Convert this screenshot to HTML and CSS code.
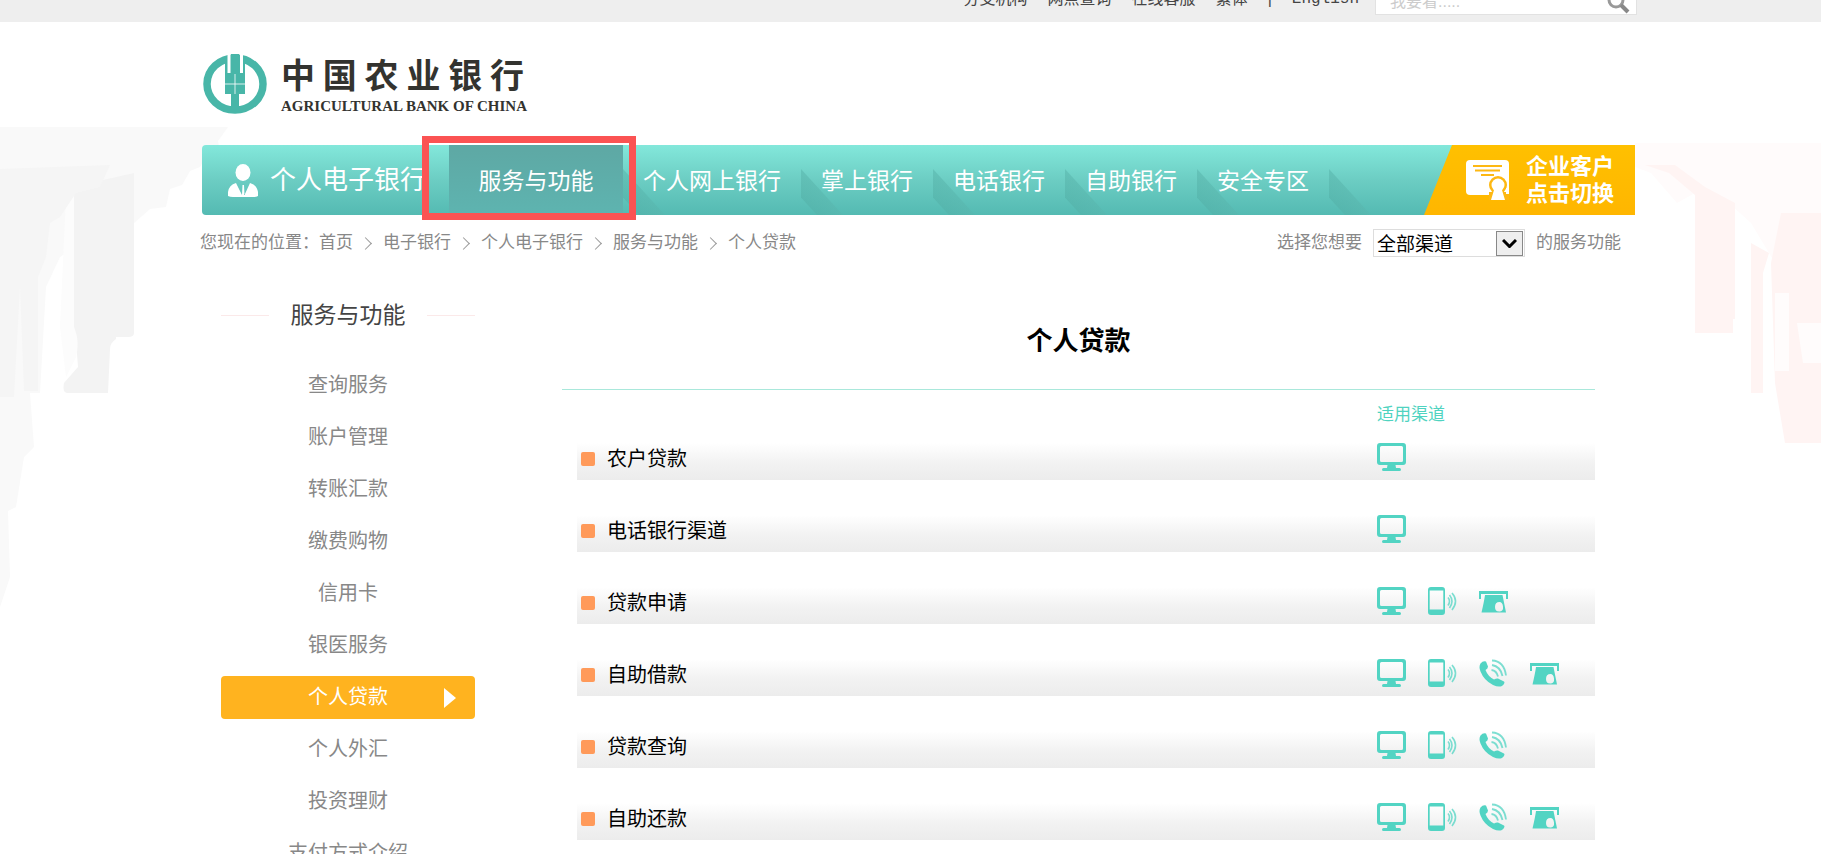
FILE: index.html
```html
<!DOCTYPE html>
<html lang="zh-CN">
<head>
<meta charset="utf-8">
<title>个人贷款 - 中国农业银行</title>
<link rel="stylesheet" href="styles.css">
</head>
<body>
<svg class="symbols" aria-hidden="true">
  <symbol id="pc" viewBox="0 0 29 28">
    <path fill-rule="evenodd" d="M3 0h23a3 3 0 0 1 3 3v16a3 3 0 0 1-3 3h-7.500l.5 3h3.500q1.500 0 1.500 1.500T22.500 28h-16Q5 28 5 26.500T6.500 25H10l.5-3H3a3 3 0 0 1-3-3V3a3 3 0 0 1 3-3zM4.500 3Q3 3 3 4.500v13Q3 19 4.500 19h20q1.500 0 1.500-1.500v-13Q26 3 24.500 3z"/>
  </symbol>
  <symbol id="mobile" viewBox="0 0 29 28">
    <path fill-rule="evenodd" d="M3 0h11a3 3 0 0 1 3 3v22a3 3 0 0 1-3 3H3a3 3 0 0 1-3-3V3a3 3 0 0 1 3-3zM1.700 3.500v19h13.600v-19z"/>
    <path fill="none" stroke="currentColor" stroke-width="1.600" opacity=".75" d="M20 10.500q3 3.500 0 8M21.500 8q5 6 0 13M24 6q7 8 0 17"/>
  </symbol>
  <symbol id="phone" viewBox="0 0 29 28">
    <path d="M1.500 4.500Q4 1.500 7 2.500l2 5Q9 9.500 6.500 11q2.500 6.500 8.500 9.500 2.500-1.500 4-1l6 3q1.500 2-2 4.500-3.500 1.500-9-1Q5 21.500 1.500 12.500-.5 8 1.500 4.500z"/>
    <path fill="none" stroke="currentColor" stroke-width="1.800" opacity=".75" d="M12.500 11q5 .5 6.500 6.500M13 6q8.500 1.500 10.500 11M13 1.500q12 .5 14 15"/>
  </symbol>
  <symbol id="atm" viewBox="0 0 29 28">
    <path d="M0 4h29v3H0zM0 7h2v5H0zM27 7h2v5h-2z"/>
    <path fill-rule="evenodd" d="M6 8h17.500l3.500 17.500H2.500Q5 15 6 8zM20.500 15q-4.500 0-4.500 5t5 4.500q3.500-.5 3-5-.5-4.500-3.500-4.500z"/>
  </symbol>
</svg>

<div class="page">
  <svg class="scene scene-left" viewBox="0 0 230 490" aria-hidden="true">
    <path fill="#f9f9f9" d="M0 0H228L218 14 220 24 206 30 200 40 190 44 182 58 170 62 166 80 150 82 134 96V116L120 130 90 110 60 130 46 160 40 266H30L34 320 24 330 16 380 8 384 10 450 0 480z"/>
    <path fill="#f3f3f3" d="M72 60L134 46V206Q134 210 128 210H116V212Q110 216 110 222L108 266H68Q62 266 64 256L78 240 76 214 70 180z"/>
    <path fill="#fcfcfc" d="M66 70L74 60V200Q80 214 76 230L66 250 60 200z"/>
    <path fill="#f5f5f5" d="M0 42L110 38 100 60 76 66 60 90 50 96 46 130 38 150V264H24L20 160 14 270H0z"/>
  </svg>
  <svg class="scene scene-right" viewBox="0 0 186 320" aria-hidden="true">
    <path fill="#fffbfb" d="M0 0H186V180H148L140 120 116 80 96 62 60 50 42 60 16 30 0 24z"/>
    <path fill="#fff4f3" d="M10 22L34 30 60 52V190H98V176H100V60L70 44 40 22zM116 100V250H128V130L134 110zM146 70L136 120 140 240 150 300H186V70z"/>
    <path fill="#fffcfc" d="M140 150h14v78h-14zM162 180h24v40h-18z"/>
  </svg>

  <header class="topbar">
    <div class="wrap topbar-inner">
      <a href="#">分支机构</a>
      <a href="#">网点查询</a>
      <a href="#">在线客服</a>
      <a href="#">繁体</a>
      <span>|</span>
      <a href="#" class="english">English</a>
      <form class="search">
        <input type="text" aria-label="搜索" placeholder="我要看.....">
        <button type="button" aria-label="搜索">
          <svg viewBox="0 0 24 24"><circle cx="10" cy="10" r="7" fill="none" stroke="#999" stroke-width="3"/><path d="M15 15l7 7" stroke="#888" stroke-width="4"/></svg>
        </button>
      </form>
    </div>
  </header>

  <div class="wrap">
    <a class="logo" href="#">
      <svg viewBox="0 0 64 60" aria-hidden="true">
        <ellipse cx="32" cy="30" rx="28" ry="26" fill="none" stroke="#48b6a8" stroke-width="7.500"/>
        <path fill="#48b6a8" d="M22 2h20v38H22zM28 0h8v59h-8z"/>
        <path fill="none" stroke="#fff" stroke-width="3" d="M26 0v19M38.500 0v19"/>
        <path fill="none" stroke="#fff" stroke-width="1" opacity=".8" d="M32 20v20M22 30h20"/>
      </svg>
      <span class="logo-text">
        <span class="logo-cn"><span>中</span><span>国</span><span>农</span><span>业</span><span>银</span><span>行</span></span>
        <span class="logo-en">AGRICULTURAL BANK OF CHINA</span>
      </span>
    </a>

    <nav class="nav">
      <a class="brand" href="#">
        <svg viewBox="0 0 30 33" aria-hidden="true"><ellipse cx="15" cy="8.500" rx="7.500" ry="8.500"/><path d="M8 19l6 12 .5-10h1.500l.5 10L22 19q7 2 8 9v4q-2 1-5 1H5q-3 0-5-1v-4q1-7 8-9z"/></svg>
        <span>个人电子银行</span>
      </a>
      <a class="item current" href="#">服务与功能</a>
      <a class="item" href="#">个人网上银行</a>
      <a class="item" href="#">掌上银行</a>
      <a class="item" href="#">电话银行</a>
      <a class="item" href="#">自助银行</a>
      <a class="item" href="#">安全专区</a>
      <a class="switch" href="#">
        <svg viewBox="0 0 43 40" aria-hidden="true">
          <rect width="43" height="35" rx="4" fill="#fff"/>
          <path stroke="#fdb813" stroke-width="2" d="M7 6h29M9 10.500h25M15 15h13"/>
          <circle cx="32" cy="25" r="9" fill="#fdb813"/><path fill="#fdb813" d="M23 32h20v8H23z"/>
          <circle cx="32" cy="25" r="6.500" fill="#fff"/><path fill="#fff" d="M28 30h8l3 10H25zM40 28h3v6h-3z"/>
        </svg>
        <span>企业客户<br>点击切换</span>
      </a>
    </nav>

    <div class="pathbar">
      <span>您现在的位置：</span>
      <ol class="crumbs">
        <li><a href="#">首页</a></li>
        <li><a href="#">电子银行</a></li>
        <li><a href="#">个人电子银行</a></li>
        <li><a href="#">服务与功能</a></li>
        <li>个人贷款</li>
      </ol>
      <div class="filter">
        <label for="channel">选择您想要</label>
        <span class="select-box">
          <select id="channel"><option>全部渠道</option></select>
          <span class="arrow"><svg viewBox="0 0 15 9" aria-hidden="true"><path d="M1 1l6.500 6.500L14 1" fill="none" stroke="#000" stroke-width="3"/></svg></span>
        </span>
        <span>的服务功能</span>
      </div>
    </div>

    <div class="columns">
      <aside class="side">
        <h2>服务与功能</h2>
        <ul>
          <li><a href="#">查询服务</a></li>
          <li><a href="#">账户管理</a></li>
          <li><a href="#">转账汇款</a></li>
          <li><a href="#">缴费购物</a></li>
          <li><a href="#">信用卡</a></li>
          <li><a href="#">银医服务</a></li>
          <li><a href="#" class="current">个人贷款</a></li>
          <li><a href="#">个人外汇</a></li>
          <li><a href="#">投资理财</a></li>
          <li><a href="#">支付方式介绍</a></li>
        </ul>
      </aside>

      <main class="main">
        <h1>个人贷款</h1>
        <p class="channel-head">适用渠道</p>
        <ul class="rows">
          <li><a href="#">农户贷款</a><span class="icons"><svg><use href="#pc"/></svg></span></li>
          <li><a href="#">电话银行渠道</a><span class="icons"><svg><use href="#pc"/></svg></span></li>
          <li><a href="#">贷款申请</a><span class="icons"><svg><use href="#pc"/></svg><svg><use href="#mobile"/></svg><svg><use href="#atm"/></svg></span></li>
          <li><a href="#">自助借款</a><span class="icons"><svg><use href="#pc"/></svg><svg><use href="#mobile"/></svg><svg><use href="#phone"/></svg><svg><use href="#atm"/></svg></span></li>
          <li><a href="#">贷款查询</a><span class="icons"><svg><use href="#pc"/></svg><svg><use href="#mobile"/></svg><svg><use href="#phone"/></svg></span></li>
          <li><a href="#">自助还款</a><span class="icons"><svg><use href="#pc"/></svg><svg><use href="#mobile"/></svg><svg><use href="#phone"/></svg><svg><use href="#atm"/></svg></span></li>
        </ul>
      </main>
    </div>
  </div>
</div>
</body>
</html>
```

FILE: styles.css
```css
* { box-sizing: border-box; }
body {
  margin: 0;
  background: #fff;
  color: #888;
  font: 17px/24px "Liberation Sans", "Noto Sans CJK SC", sans-serif;
}
a { color: inherit; text-decoration: none; }
ul, ol { list-style: none; margin: 0; padding: 0; }
h1, h2, p { margin: 0; }
.symbols { display: none; }

.page { position: relative; height: 100vh; overflow: hidden; padding-left: 16px; }
.wrap { position: relative; max-width: 1433px; margin: 0 auto; }

.scene { position: absolute; }
.scene-left { left: 0; top: 127px; width: 230px; }
.scene-right { right: 0; top: 143px; width: 186px; }

/* top bar */
.topbar { height: 22px; margin-left: -16px; padding-left: 16px; background: #eee; }
.topbar-inner {
  display: flex;
  align-items: flex-end;
  justify-content: flex-end;
  gap: 20px;
  height: 15px;
  color: #444;
  font-size: 16px;
  line-height: 24px;
}
.topbar-inner > a, .topbar-inner > span { margin-bottom: 4px; white-space: nowrap; }
.english { font-family: "Liberation Mono", monospace; }
.search { display: flex; width: 262px; height: 26px; margin-left: -4px; margin-right: -2px; background: #fff; border: 1px solid #e2e2e2; }
.search input { flex: 1; min-width: 0; border: 0; padding: 0 14px; font: inherit; background: transparent; }
.search input::placeholder { color: #ccc; }
.search button { width: 30px; border: 0; padding: 0; background: none; }
.search svg { display: block; width: 24px; height: 24px; }

/* logo */
.logo { display: flex; gap: 14px; padding: 32px 0 31px 1px; }
.logo > svg { width: 64px; height: 60px; }
.logo-text { width: 243px; color: #33332f; font-weight: 700; }
.logo-cn { display: flex; justify-content: space-between; font-size: 34px; line-height: 44px; }
.logo-en { display: block; font: 700 15px/16px "Liberation Serif", serif; white-space: nowrap; }

/* main navigation */
.nav {
  display: flex;
  height: 70px;
  border-radius: 4px 0 0 4px;
  background: linear-gradient(#83e8db, #6ccdc3 50%, #54bab2);
  color: #fff;
  font-size: 23px;
  line-height: 72px;
  white-space: nowrap;
}
.brand { display: flex; align-items: center; gap: 12px; width: 247px; padding-left: 26px; font-size: 26px; }
.brand svg { width: 30px; height: 33px; fill: #fff; }
.item { position: relative; padding: 0 20px; }
.item::after {
  content: "";
  position: absolute;
  right: -42px;
  bottom: 0;
  width: 42px;
  height: 46px;
  background: linear-gradient(90deg, #4fa9a0, #5bb5ad);
  opacity: 0.4;
  clip-path: polygon(0 0, 100% 100%, 38% 100%, 0 62%);
}
.item.current { width: 174px; text-align: center; background: linear-gradient(#5ea8a4, #5eb4b0); }
.item.current::before {
  content: "";
  position: absolute;
  inset: -9px -13px -5px -27px;
  z-index: 1;
  border: 7px solid #fb5353;
}
.switch {
  display: flex;
  align-items: center;
  gap: 17px;
  width: 211px;
  margin-left: auto;
  padding-left: 42px;
  background: linear-gradient(#ffc000, #ffb600);
  clip-path: polygon(28px 0, 100% 0, 100% 100%, 0 100%);
  font-size: 22px;
  font-weight: 700;
  line-height: 27px;
}
.switch svg { width: 43px; height: 40px; }

/* breadcrumb and filter */
.pathbar { display: flex; align-items: center; padding: 14px 14px 0 0; margin-left: -2px; height: 42px; white-space: nowrap; }
.crumbs { display: flex; gap: 30px; }
.crumbs li { position: relative; }
.crumbs li + li::before {
  content: "";
  position: absolute;
  left: -22px;
  top: 8px;
  width: 8px;
  height: 8px;
  border: solid #999;
  border-width: 1px 1px 0 0;
  transform: rotate(45deg);
}
.filter { display: flex; align-items: center; gap: 11px; margin-left: auto; }
.select-box { position: relative; width: 152px; height: 28px; border: 1px solid #ddd; background: #fff; }
.select-box select {
  width: 100%;
  height: 26px;
  padding: 0 0 0 3px;
  border: 0;
  appearance: none;
  background: transparent;
  color: #000;
  font: 19px/26px "Noto Sans CJK SC", sans-serif;
}
.arrow {
  position: absolute;
  right: 1px;
  top: 1px;
  display: grid;
  place-items: center;
  width: 27px;
  height: 25px;
  border: 1px solid #888;
  background: #eee;
  pointer-events: none;
}
.arrow svg { width: 15px; height: 9px; }

/* columns */
.columns { display: flex; gap: 87px; padding: 43px 40px 0 19px; }
.side { width: 254px; flex: none; }
.side h2 {
  display: flex;
  align-items: center;
  justify-content: space-between;
  color: #444;
  font-size: 23px;
  font-weight: 400;
  line-height: 30px;
}
.side h2::before, .side h2::after { content: ""; width: 48px; height: 1px; background: #fbe9e9; }
.side ul { display: grid; gap: 9px; margin-top: 34px; }
.side li a { position: relative; display: block; border-radius: 4px; text-align: center; font-size: 20px; line-height: 43px; }
.side .current { background: #ffb31f; color: #fff; }
.side .current::after {
  content: "";
  position: absolute;
  right: 19px;
  top: 12px;
  border: solid transparent;
  border-width: 10px 0 10px 12px;
  border-left-color: #fff;
}

.main { flex: 1; min-width: 0; }
.main h1 {
  padding: 23px 0 29px;
  border-bottom: 1px solid #a9e8db;
  color: #000;
  font-size: 26px;
  line-height: 37px;
  text-align: center;
}
.channel-head { padding: 13px 0 11px; margin-left: auto; width: 218px; color: #4fd3c0; }
.rows { display: grid; gap: 30px; padding-left: 15px; }
.rows li {
  display: flex;
  align-items: center;
  height: 42px;
  padding-left: 4px;
  background: linear-gradient(#fff 12%, #f2f2f2 60%, #ececec);
}
.rows li::before { content: ""; width: 14px; height: 14px; border-radius: 2px; margin-right: 12px; background: #ff9a5a; }
.rows a { color: #000; font-size: 20px; }
.icons { display: flex; gap: 22px; width: 218px; margin-left: auto; padding-bottom: 4px; color: #52d4c3; }
.icons svg { width: 29px; height: 28px; fill: currentColor; }
```
